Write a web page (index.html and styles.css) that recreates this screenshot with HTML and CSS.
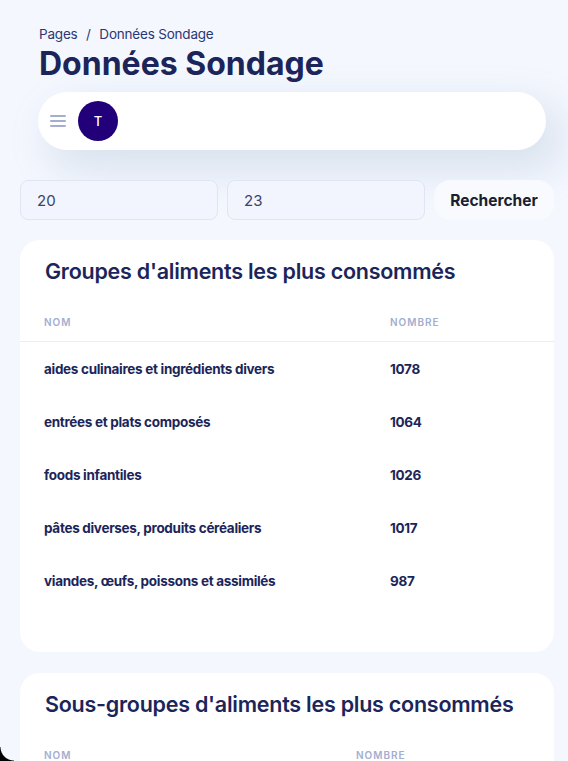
FILE: index.html
```html
<!DOCTYPE html>
<html lang="fr">
<head>
<meta charset="utf-8">
<title>Données Sondage</title>
<link rel="stylesheet" href="styles.css">
</head>
<body>
<div class="page">
  <header class="head">
    <div class="crumbs">Pages <span class="sep">/</span> Données Sondage</div>
    <h1 class="title">Données Sondage</h1>
  </header>
  <nav class="navbar">
    <span class="burger"><i></i><i></i><i></i></span>
    <span class="avatar">T</span>
  </nav>
  <form class="search">
    <input class="field" type="text" value="20">
    <input class="field" type="text" value="23">
    <button class="btn" type="button">Rechercher</button>
  </form>
  <section class="card">
    <h2 class="card-title">Groupes d'aliments les plus consommés</h2>
    <div class="table t1">
      <div class="th">Nom</div><div class="th">Nombre</div>
      <div class="td">aides culinaires et ingrédients divers</div><div class="td">1078</div>
      <div class="td">entrées et plats composés</div><div class="td">1064</div>
      <div class="td">foods infantiles</div><div class="td">1026</div>
      <div class="td">pâtes diverses, produits céréaliers</div><div class="td">1017</div>
      <div class="td">viandes, œufs, poissons et assimilés</div><div class="td">987</div>
    </div>
  </section>
  <section class="card">
    <h2 class="card-title">Sous-groupes d'aliments les plus consommés</h2>
    <div class="table t2">
      <div class="th">Nom</div><div class="th">Nombre</div>
    </div>
  </section>
</div>
<div class="corner"></div>
</body>
</html>
```
FILE: styles.css
```css
* { box-sizing: border-box; }
html, body { margin: 0; }
body {
  background: #f4f7fe;
  font-family: "Inter", "DejaVu Sans", sans-serif;
  color: #1b2559;
  overflow: hidden;
}
.page {
  padding: 24px 14px 40px 20px;
}
.head { padding-left: 19px; }
.crumbs {
  font-size: 13.5px;
  line-height: 20px;
  color: #2b3674;
  letter-spacing: -0.2px;
}
.sep { margin: 0 5px; }
.title {
  margin: 0;
  font-size: 32px;
  line-height: 40px;
  font-weight: 700;
  color: #1b2559;
  letter-spacing: 0;
}
.navbar {
  margin: 8px 8px 0 18px;
  height: 58px;
  border-radius: 29px;
  background: #fff;
  box-shadow: 14px 17px 40px 4px rgba(112, 144, 176, 0.2);
  display: flex;
  align-items: center;
  padding-left: 12px;
  gap: 12px;
}
.burger {
  width: 16px;
  display: flex;
  flex-direction: column;
  gap: 3px;
}
.burger i {
  display: block;
  height: 2px;
  background: #a3aed0;
  border-radius: 1px;
}
.avatar {
  width: 40px;
  height: 40px;
  border-radius: 50%;
  background: #22007a;
  color: #fff;
  font-size: 13px;
  font-weight: 500;
  display: flex;
  align-items: center;
  justify-content: center;
}
.search {
  margin-top: 30px;
  display: flex;
  gap: 9px;
}
.field {
  width: 198px;
  height: 40px;
  border: 1px solid #e0e5f2;
  border-radius: 8px;
  background: #f2f5fd;
  padding: 0 16px;
  font-family: inherit;
  font-size: 15px;
  color: #3a4468;
  outline: none;
}
.btn {
  width: 121px;
  height: 40px;
  border: 0;
  border-radius: 16px;
  background: #f8fafd;
  font-family: inherit;
  font-size: 15.5px;
  font-weight: 700;
  color: #1a202c;
  letter-spacing: 0;
}
.card {
  margin-top: 20px;
  background: #fff;
  border-radius: 20px;
  padding: 16px 0 45px;
}
.card + .card { margin-top: 21px; }
.card-title {
  margin: 0;
  padding-left: 25px;
  font-size: 21.5px;
  line-height: 30px;
  font-weight: 600;
  color: #1b2559;
  letter-spacing: -0.25px;
}
.table {
  margin-top: 16px;
  display: grid;
}
.t1 { grid-template-columns: 370px 1fr; }
.t2 { grid-template-columns: 336px 1fr; }
.th {
  height: 40px;
  display: flex;
  align-items: center;
  border-bottom: 1px solid #e9edf7;
  font-size: 10px;
  font-weight: 600;
  text-transform: uppercase;
  letter-spacing: 1px;
  color: #a3aed0;
}
.th:nth-child(odd), .td:nth-child(odd) { padding-left: 24px; }
.td {
  height: 53px;
  display: flex;
  align-items: center;
  font-size: 13.5px;
  font-weight: 700;
  color: #1b2559;
  letter-spacing: -0.3px;
}
.corner {
  position: fixed;
  left: 0;
  bottom: 0;
  width: 14px;
  height: 14px;
  background: radial-gradient(circle at 14px 0, transparent 13px, #000 14px);
}
```
